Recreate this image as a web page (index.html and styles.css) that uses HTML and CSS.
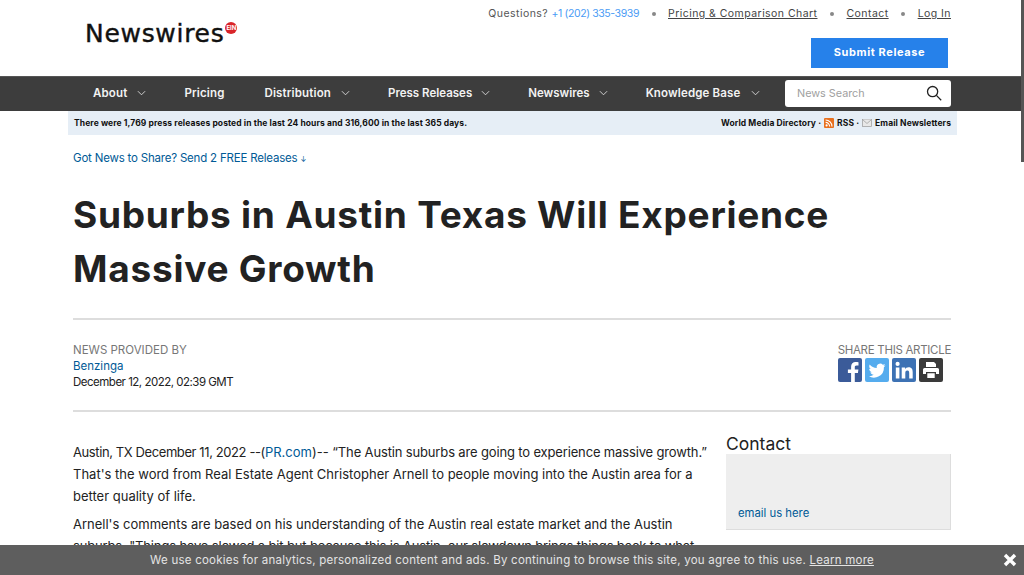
FILE: index.html
```html
<!DOCTYPE html>
<html>

	<head>
		<meta charset="UTF-8">
		<title>Suburbs in Austin Texas Will Experience Massive Growth</title>
		<link rel="stylesheet" href="styles.css">
	</head>

	<body>
		<header class="top">
			<div class="logo">
				<span class="logoText">Newswires</span>
				<span class="logoBadge">EIN</span>
			</div>
			<div class="topRight">
				<div class="topLinks">
					<span>Questions? <a class="phone" href="#">+1 (202) 335-3939</a></span>
					<i class="dot"></i>
					<a href="#">Pricing &amp; Comparison Chart</a>
					<i class="dot"></i>
					<a href="#">Contact</a>
					<i class="dot"></i>
					<a href="#">Log In</a>
				</div>
				<a class="submit" href="#">Submit Release</a>
			</div>
		</header>

		<nav class="nav">
			<a class="navItem" href="#">About <svg class="chev" viewBox="0 0 10 6"><path d="M1 1l4 4 4-4"/></svg></a>
			<a class="navItem navPricing" href="#">Pricing</a>
			<a class="navItem" href="#">Distribution <svg class="chev" viewBox="0 0 10 6"><path d="M1 1l4 4 4-4"/></svg></a>
			<a class="navItem navTight" href="#">Press Releases <svg class="chev" viewBox="0 0 10 6"><path d="M1 1l4 4 4-4"/></svg></a>
			<a class="navItem navTight" href="#">Newswires <svg class="chev" viewBox="0 0 10 6"><path d="M1 1l4 4 4-4"/></svg></a>
			<a class="navItem navLast" href="#">Knowledge Base <svg class="chev" viewBox="0 0 10 6"><path d="M1 1l4 4 4-4"/></svg></a>
			<div class="search">
				<span>News Search</span>
				<svg viewBox="0 0 16 16" width="16" height="16"><circle cx="6.6" cy="6.6" r="5.1"/><path d="M10.4 10.4l4.8 4.8"/></svg>
			</div>
		</nav>

		<div class="info">
			<span>There were 1,769 press releases posted in the last 24 hours and 316,600 in the last 365 days.</span>
			<span class="infoLinks">
				World Media Directory ·
				<svg class="rss" viewBox="0 0 10 10" width="10" height="10"><rect width="10" height="10" rx="1"/><circle cx="2.6" cy="7.4" r="1.1"/><path d="M1.6 4.4a4 4 0 0 1 4 4M1.6 2a6.4 6.4 0 0 1 6.4 6.4"/></svg>
				RSS ·
				<svg class="mail" viewBox="0 0 10 10" width="10" height="10"><rect x=".5" y="1.5" width="9" height="7"/><path d="M.5 1.5l4.5 4 4.5-4"/></svg>
				Email Newsletters
			</span>
		</div>

		<main class="page">
			<a class="promo" href="#">Got News to Share? Send 2 FREE Releases <span class="arrow">↓</span></a>
			<h1>Suburbs in Austin Texas Will Experience Massive Growth</h1>

			<div class="meta">
				<div>
					<div class="label">NEWS PROVIDED BY</div>
					<a href="#">Benzinga</a>
					<div class="date">December 12, 2022, 02:39 GMT</div>
				</div>
				<div class="share">
					<div class="label shareLabel">SHARE THIS ARTICLE</div>
					<div class="shareIcons">
						<svg class="fb" viewBox="0 0 24 24"><path d="M16.8 24v-9h3.1l.5-3.6h-3.6V9.2c0-1 .3-1.8 1.8-1.8h1.900V4.200c-.4 0-1.500-.2-2.800-.2-2.800 0-4.600 1.700-4.600 4.700v2.700H9.900V15h3.200v9z"/></svg>
						<svg class="tw" viewBox="0 0 24 24"><path d="M20.5 7.3c-.6.3-1.3.5-2 .6.7-.4 1.3-1.1 1.5-1.9-.7.4-1.4.7-2.2.8a3.5 3.5 0 0 0-6 3.2C8.9 9.900 6.400 8.500 4.700 6.400c-.9 1.600-.5 3.600 1.100 4.700-.6 0-1.100-.2-1.600-.4 0 1.700 1.200 3.100 2.800 3.500-.5.100-1 .2-1.600.1.400 1.400 1.700 2.400 3.300 2.400A7 7 0 0 1 3.500 18.100a10 10 0 0 0 15.400-8.900c.7-.5 1.200-1.100 1.600-1.900z"/></svg>
						<svg class="li" viewBox="0 0 24 24"><path d="M3.800 9.500h3.600V20.500H3.800zM5.600 3.800a2.100 2.100 0 1 1 0 4.200 2.100 2.100 0 0 1 0-4.200zM9.700 9.500h3.400V11c.5-.9 1.700-1.800 3.400-1.800 3.600 0 4.200 2.300 4.200 5.400v5.900h-3.500v-5.200c0-1.300 0-2.900-1.800-2.900s-2.100 1.400-2.100 2.800v5.300H9.700z"/></svg>
						<svg class="pr" viewBox="0 0 24 24"><path d="M7 4h8l2 2v3H7zM5.500 10h13A1.500 1.500 0 0 1 20 11.500V16h-3v-2H7v2H4v-4.500A1.500 1.500 0 0 1 5.500 10zM8.300 15.200h7.400V20H8.300z"/></svg>
					</div>
				</div>
			</div>

			<div class="columns">
				<article class="story">
					<p><span class="dateline">Austin, TX December 11, 2022 --(</span><a href="#">PR.com</a>)-- <span class="quoteRun">“The Austin suburbs are going to experience massive growth.”</span> That's the word from Real Estate Agent Christopher Arnell to people moving into the Austin area for a better quality of life.</p>
					<p>Arnell's comments are based on his understanding of the Austin real estate market and the Austin <span class="quoteRun">suburbs. "Things have slowed a bit but because this is Austin, our slowdown brings things back to what</span></p>
				</article>
				<aside class="side">
					<h2>Contact</h2>
					<div class="contactBox"><a href="#">email us here</a></div>
				</aside>
			</div>
		</main>

		<div class="cookie">
			<span>We use cookies for analytics, personalized content and ads. By continuing to browse this site, you agree to this use. <a href="#">Learn more</a></span>
			<svg class="close" viewBox="0 0 14 14" width="14" height="14"><path d="M2 2l10 10M12 2L2 12"/></svg>
		</div>
		<div class="scrollbar"><div class="thumb"></div></div>
	</body>

</html>
```

FILE: styles.css
```css
html, body {
	height: 100%;
	overflow: hidden;
}

body {
	margin: 0;
	background: #fff;
	color: #222;
	font-family: Inter, "Liberation Sans", sans-serif;
	font-size: 13px;
}

a {
	color: #005a96;
	text-decoration: none;
}

/* header */
.top {
	height: 76px;
	box-sizing: border-box;
	padding: 7px 73px 0 85px;
	display: flex;
	justify-content: space-between;
}

.logo {
	display: flex;
	align-items: flex-start;
	padding-top: 12px;
}

.logoText {
	font-family: "DejaVu Sans", sans-serif;
	font-size: 25px;
	line-height: 30px;
	letter-spacing: .7px;
	color: #111;
	-webkit-text-stroke: .4px #111;
}

.logoBadge {
	width: 12px;
	height: 12px;
	margin: 3px 0 0 1px;
	border-radius: 50%;
	background: #d9252a;
	color: #fff;
	font-size: 6px;
	font-weight: 700;
	line-height: 12px;
	text-align: center;
}

.topRight {
	display: flex;
	flex-direction: column;
	align-items: flex-end;
}

.topLinks {
	display: flex;
	align-items: center;
	gap: 10.5px;
	font-size: 10.5px;
	line-height: 14px;
	letter-spacing: .45px;
	color: #555;
}

.topLinks a {
	color: #444;
	text-decoration: underline;
}

.topLinks a.phone {
	color: #4a9bf5;
	letter-spacing: -.4px;
	text-decoration: none;
}

.dot {
	width: 4px;
	height: 4px;
	margin: 0 2px;
	border-radius: 50%;
	background: #888;
}

.submit {
	width: 137px;
	height: 30px;
	margin: 17px 3px 0 0;
	background: #2681ea;
	color: #fff;
	font-size: 11px;
	font-weight: 700;
	letter-spacing: .6px;
	line-height: 29px;
	text-align: center;
}

/* nav */
.nav {
	height: 35px;
	box-sizing: border-box;
	padding: 0 73px 2px 93px;
	display: flex;
	align-items: center;
	background: #3d3d3d;
	border-top: 1px solid #555;
}

.navItem {
	display: flex;
	align-items: center;
	flex-shrink: 0;
	margin-right: 38px;
	color: #f2f2f2;
	font-size: 11.5px;
	font-weight: 600;
	letter-spacing: .15px;
	white-space: nowrap;
}

.navPricing {
	margin-right: 40px;
}

.navLast {
	margin-right: 0;
}

.chev {
	width: 9px;
	height: 6px;
	margin-left: 10px;
	fill: none;
	stroke: #ddd;
	stroke-width: 1;
}

.navTight {
	letter-spacing: 0;
}

.navTight .chev {
	margin-left: 9px;
}

.search {
	width: 166px;
	height: 27px;
	box-sizing: border-box;
	flex-shrink: 0;
	margin-left: auto;
	padding: 0 9px 0 12px;
	display: flex;
	align-items: center;
	justify-content: space-between;
	background: #fff;
	border-radius: 3px;
	color: #a0a0a0;
	font-size: 10.8px;
}

.search svg {
	fill: none;
	stroke: #222;
	stroke-width: 1.3;
}

/* info strip */
.info {
	height: 24px;
	margin: 0 67px 0 68px;
	padding: 0 6px;
	display: flex;
	align-items: center;
	justify-content: space-between;
	background: #e6eef6;
	color: #111;
	font-size: 8.5px;
	font-weight: 700;
	letter-spacing: .09px;
}

.infoLinks {
	display: flex;
	align-items: center;
	gap: 3px;
}

.rss rect {
	fill: #e8701f;
}

.rss circle {
	fill: #fff;
}

.rss path {
	fill: none;
	stroke: #fff;
	stroke-width: 1.1;
}

.mail {
	fill: #e8e8e8;
	stroke: #999;
	stroke-width: .7;
}

/* page */
.page {
	margin: 0 73px;
}

.promo {
	display: block;
	margin-top: 15px;
	font-size: 11.5px;
	letter-spacing: -.2px;
	line-height: 16px;
}

.arrow {
	font-size: 7px;
}

h1 {
	margin: 20px 0 0;
	padding-bottom: 22px;
	border-bottom: 2px solid #ddd;
	font-size: 37px;
	font-weight: 700;
	letter-spacing: .75px;
	line-height: 54px;
	color: #222;
}

.meta {
	height: 92px;
	box-sizing: border-box;
	padding-top: 22px;
	display: flex;
	justify-content: space-between;
	border-bottom: 2px solid #ddd;
	font-size: 11.5px;
	line-height: 16px;
}

.label {
	color: #777;
}

.shareLabel {
	letter-spacing: -.3px;
}

.date {
	letter-spacing: -.5px;
}

.shareIcons {
	display: flex;
	gap: 3px;
}

.shareIcons svg {
	width: 24px;
	height: 24px;
	border-radius: 2px;
	fill: #fff;
}

.fb {
	background: #3b5b99;
}

.tw {
	background: #55acee;
}

.li {
	background: #3d72b4;
}

.pr {
	background: #3a3a3a;
}

.columns {
	display: flex;
	justify-content: space-between;
	padding-top: 29px;
}

.story {
	width: 635px;
	font-size: 13px;
	line-height: 22px;
}

.story p {
	margin: 0 0 6px;
}

.dateline {
	letter-spacing: -.4px;
}

.quoteRun {
	letter-spacing: -.15px;
}

.side {
	width: 225px;
	margin-top: -8px;
}

h2 {
	margin: 0;
	font-size: 17.5px;
	font-weight: 400;
	line-height: 21px;
}

.contactBox {
	height: 76px;
	box-sizing: border-box;
	padding: 0 12px 5px;
	display: flex;
	align-items: flex-end;
	background: #eee;
	border-right: 1px solid #ddd;
	border-bottom: 1px solid #ddd;
	font-size: 11.3px;
	line-height: 22px;
}

/* fixed bits */
.cookie {
	position: fixed;
	left: 0;
	right: 0;
	bottom: 0;
	height: 30px;
	display: flex;
	align-items: center;
	justify-content: center;
	background: #5e5e5e;
	color: #e4e4e4;
	font-size: 11.5px;
	letter-spacing: .23px;
}

.cookie a {
	color: #e4e4e4;
	text-decoration: underline;
}

.close {
	position: absolute;
	right: 7px;
	top: 8px;
	stroke: #fff;
	stroke-width: 3.4;
}

.scrollbar {
	position: fixed;
	top: 0;
	right: 0;
	width: 3px;
	height: 545px;
}

.thumb {
	height: 162px;
	background: #555;
}
```
